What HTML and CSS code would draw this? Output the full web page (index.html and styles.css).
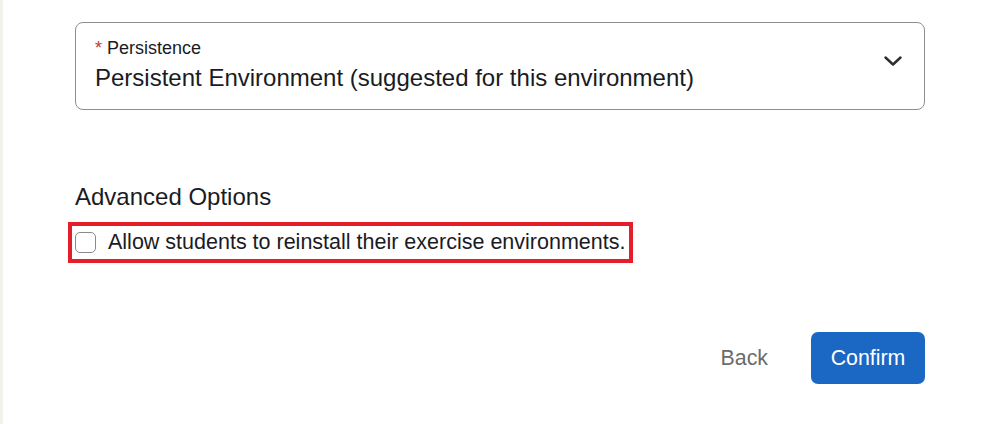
FILE: index.html
```html
<!DOCTYPE html>
<html lang="en">
<head>
<meta charset="utf-8">
<title>Persistence</title>
<link rel="stylesheet" href="styles.css">
</head>
<body>
<div class="page">
  <main class="content">
    <div class="select">
      <div class="select-text">
        <div class="select-label"><span class="req">*</span> Persistence</div>
        <div class="select-value">Persistent Environment (suggested for this environment)</div>
      </div>
      <svg class="chevron" width="18" height="10" viewBox="0 0 18 10" aria-hidden="true">
        <path d="M1.5 1.5 L9 8.5 L16.5 1.5" fill="none" stroke="#2d2d30" stroke-width="2.4" stroke-linecap="round" stroke-linejoin="round"/>
      </svg>
    </div>

    <h2 class="section-title">Advanced Options</h2>
    <label class="check-row">
      <span class="checkbox"></span>
      <span class="check-label">Allow students to reinstall their exercise environments.</span>
    </label>

    <div class="actions">
      <button class="btn-back" type="button">Back</button>
      <button class="btn-confirm" type="button">Confirm</button>
    </div>
  </main>
</div>
</body>
</html>
```
FILE: styles.css
```css
html, body {
  margin: 0;
  padding: 0;
  background: #ffffff;
}
body {
  font-family: "Liberation Sans", Arial, sans-serif;
  color: #1b1b1f;
}
.page {
  width: 984px;
  height: 424px;
  border-left: 3px solid #f2f1ec;
  box-sizing: border-box;
  overflow: hidden;
}
.content {
  width: 850px;
  margin-left: 72px;
  padding-top: 22px;
}
.select {
  box-sizing: border-box;
  height: 88px;
  border: 1px solid #8e8e8e;
  border-radius: 8px;
  display: flex;
  align-items: center;
  padding: 0 22px 0 19px;
}
.select-text {
  flex: 1;
  display: flex;
  flex-direction: column;
}
.select-label {
  font-size: 18px;
  line-height: 20px;
  margin-top: -2px;
  color: #1b1b1f;
}
.req {
  color: #c23934;
}
.select-value {
  font-size: 24px;
  line-height: 28px;
  margin-top: 6px;
  color: #1b1b1f;
}
.chevron {
  display: block;
  margin-top: -10px;
}
.section-title {
  margin: 73px 0 0 0;
  font-size: 24px;
  line-height: 28px;
  font-weight: normal;
  color: #1b1b1f;
}
.check-row {
  display: inline-flex;
  align-items: center;
  margin: 11px 0 0 -7px;
  border: 4px solid #e41f2b;
  padding: 4px 4px 5px 3px;
  gap: 12px;
}
.checkbox {
  box-sizing: border-box;
  width: 21px;
  height: 21px;
  border: 1px solid #8a8a8a;
  border-radius: 5px;
  background: #ffffff;
}
.check-label {
  font-size: 21.5px;
  line-height: 24px;
  color: #1b1b1f;
}
.actions {
  display: flex;
  justify-content: flex-end;
  align-items: center;
  gap: 23px;
  margin-top: 69px;
}
.btn-back {
  font-family: inherit;
  font-size: 21.33px;
  color: #6b6b6b;
  background: none;
  border: none;
  padding: 0 20px;
  height: 52px;
}
.btn-confirm {
  font-family: inherit;
  font-size: 21.33px;
  color: #ffffff;
  background: #1b67c4;
  border: none;
  border-radius: 7px;
  height: 52px;
  width: 114px;
  padding: 0;
}
```
